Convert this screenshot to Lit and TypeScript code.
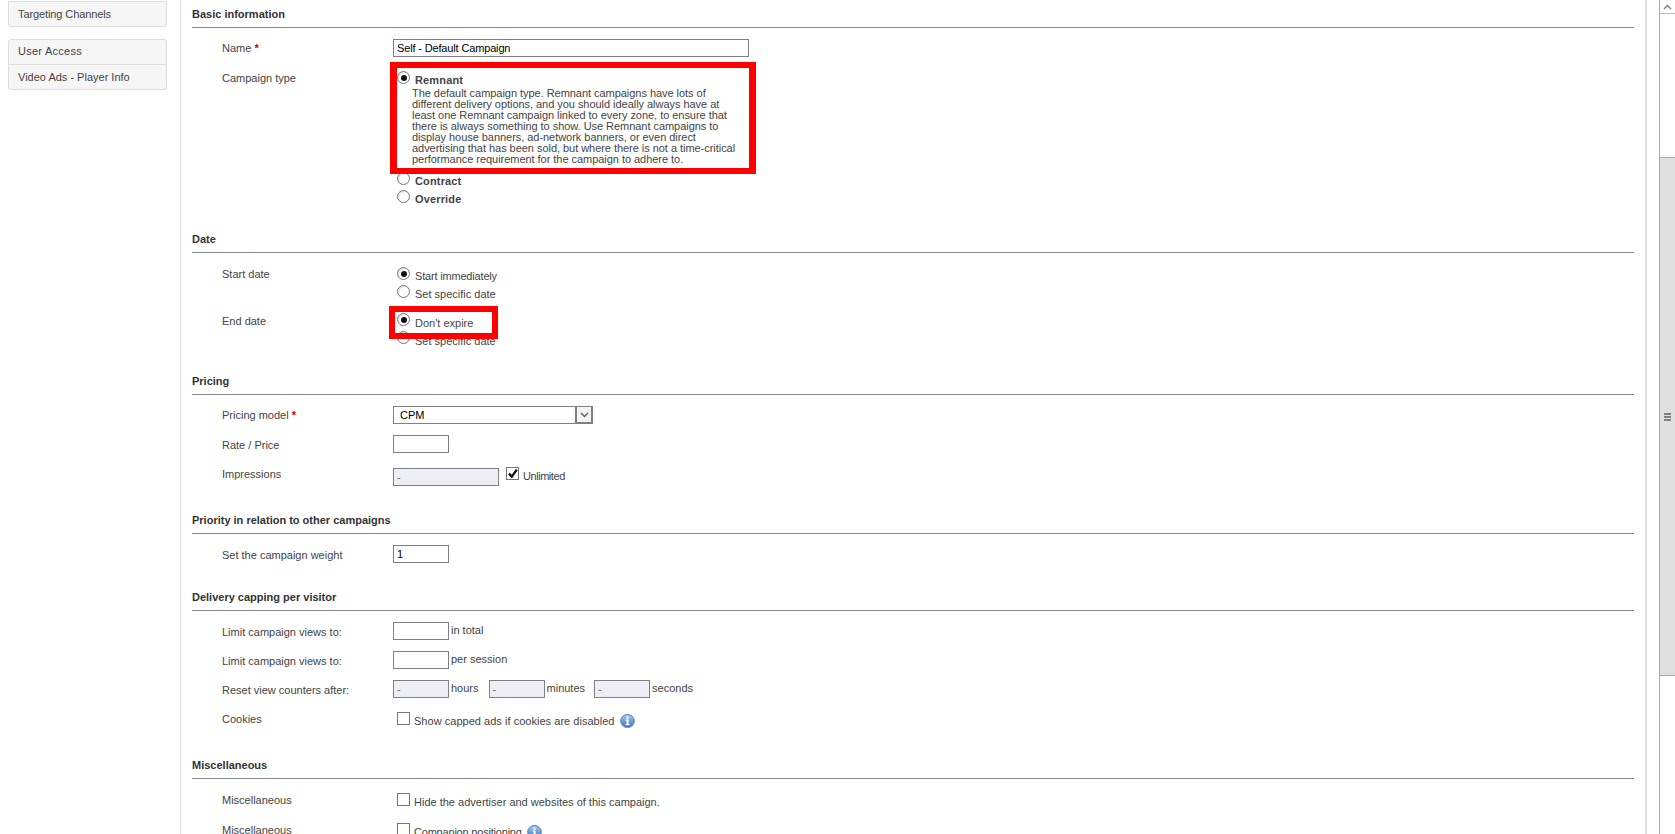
import { LitElement, html, css, svg } from "lit";
import { customElement } from "lit/decorators.js";

const infoIcon = html`<svg class="info" width="15" height="14" viewBox="0 0 15 14" aria-hidden="true">
  <defs><linearGradient id="ig" x1="0" y1="0" x2="0" y2="1"><stop offset="0" stop-color="#a9c8ec"/><stop offset="1" stop-color="#3d78c0"/></linearGradient></defs>
  <ellipse cx="7.5" cy="7" rx="6.8" ry="6.5" fill="url(#ig)" stroke="#4f7fb8"/>
  <rect x="6.4" y="2.6" width="2.2" height="2" fill="#fff"/>
  <path d="M5.6 5.6h3v4.4h1v1.2H5.6V10h1V6.8h-1z" fill="#fff"/>
</svg>`;

const tick = svg`<path d="M2 5.6 L4.8 8.6 L9.8 1.6" fill="none" stroke="#111" stroke-width="2.4"/>`;

const DESC = [
  "The default campaign type. Remnant campaigns have lots of",
  "different delivery options, and you should ideally always have at",
  "least one Remnant campaign linked to every zone, to ensure that",
  "there is always something to show. Use Remnant campaigns to",
  "display house banners, ad-network banners, or even direct",
  "advertising that has been sold, but where there is not a time-critical",
  "performance requirement for the campaign to adhere to.",
];

@customElement("app-root")
export class AppRoot extends LitElement {
  static styles = css`
    :host {
      display: flex;
      width: 1675px;
      height: 834px;
      overflow: hidden;
      background: #fff;
      font-family: "Liberation Sans", Arial, sans-serif;
      font-size: 11px;
      color: #444;
    }
    .side {
      width: 181px;
      flex: none;
      box-sizing: border-box;
      padding: 0 13px 0 8px;
      border-right: 1px solid #ddd;
    }
    .nav {
      border: 1px solid #ddd;
      border-radius: 3px;
      background: #f6f6f6;
      margin-bottom: 12px;
    }
    .nav.cut {
      border-radius: 0 0 3px 3px;
      margin-top: 1px;
    }
    .nav div {
      height: 24px;
      line-height: 24px;
      padding-left: 9px;
      color: #444;
      border-top: 1px solid #ddd;
    }
    .nav div:first-child { border-top: 0; }
    .nav .targeting { letter-spacing: -0.1px; }
    .nav .access { letter-spacing: 0.25px; line-height: 22px; }
    .main {
      width: 1466px;
      flex: none;
      box-sizing: border-box;
      padding-left: 11px;
      padding-right: 11px;
      border-right: 2px solid #e0e0e0;
    }
    .gutter { width: 12px; flex: none; }
    section { padding-bottom: 20px; }
    h2 {
      margin: 0;
      height: 27px;
      line-height: 28px;
      font-size: 11px;
      font-weight: bold;
      color: #333;
      border-bottom: 1px solid #888;
    }
    .row {
      display: grid;
      grid-template-columns: 171px 1fr;
      padding: 11px 0 0 30px;
    }
    .label { height: 18px; line-height: 20px; }
    .label.tight { line-height: 18px; }
    .req { color: #c00; font-weight: bold; }
    .inline { display: flex; align-items: flex-start; }
    input[type="text"] {
      box-sizing: border-box;
      display: block;
      height: 18px;
      width: 56px;
      margin: 0;
      padding: 0 3px;
      border: 1px solid #808080;
      border-radius: 0;
      outline: 0;
      background: #fff;
      color: #000;
      font: 11px "Liberation Sans", Arial, sans-serif;
    }
    input.wide { width: 356px; letter-spacing: -0.15px; }
    input.mid { width: 106px; margin-top: 4px; }
    input.off { background: #eeeef7; color: #666; }
    .suffix { line-height: 16px; margin-left: 2px; }
    .suffix.gap { margin-right: 9px; }
    .suffix.gap-l { margin-right: 10px; }
    .select {
      box-sizing: border-box;
      width: 200px;
      height: 18px;
      display: flex;
      border: 1px solid #808080;
      color: #000;
      line-height: 16px;
      padding-left: 6px;
    }
    .select span { flex: 1; }
    .select b {
      box-sizing: border-box;
      width: 17px;
      border-left: 2px solid #808080;
      border-right: 1px solid #808080;
      border-bottom: 1px solid #808080;
      background: #f4f4f4;
      display: flex;
      align-items: center;
      justify-content: center;
    }
    .group { position: relative; }
    .group.end { margin-top: -1px; padding-bottom: 1px; }
    .group.end .opt { line-height: 26px; }
    .opt { display: flex; height: 18px; padding-left: 4px; line-height: 24px; }
    .radio {
      box-sizing: border-box;
      flex: none;
      width: 13px;
      height: 13px;
      margin-top: 3px;
      border: 1px solid #777;
      border-radius: 50%;
      background: #fff;
      box-shadow: inset 1px 1px 1px #ddd;
      display: flex;
      align-items: center;
      justify-content: center;
    }
    .radio i { width: 6px; height: 6px; border-radius: 50%; background: #111; }
    .opt .text { margin-left: 5px; }
    .opt .bold { font-weight: bold; letter-spacing: 0.15px; }
    .opt .narrow { letter-spacing: -0.18px; }
    .desc {
      margin: 2px 0 0 19px;
      line-height: 11px;
      padding: 0 0 4px;
      white-space: nowrap;
      letter-spacing: -0.04px;
    }
    .desc span { display: block; }
    .check { display: flex; padding-left: 4px; height: 19px; line-height: 24px; }
    .check.after { margin-left: 7px; padding-left: 0; }
    .check.after .text { letter-spacing: -0.45px; }
    .check.last { margin-bottom: 3px; }
    .box {
      box-sizing: border-box;
      flex: none;
      width: 13px;
      height: 13px;
      margin-top: 3px;
      border: 1px solid #777;
      background: #fff;
      display: block;
    }
    .box svg { display: block; }
    .check .text { margin: 0 5px 0 4px; }
    .check .loose { letter-spacing: 0.03px; }
    .check .narrow { letter-spacing: -0.2px; }
    .info { flex: none; margin-top: 5px; }
    .ann {
      position: absolute;
      box-sizing: border-box;
      border: 6px solid #f00;
      border-left-width: 7px;
      border-right-width: 7px;
      pointer-events: none;
    }
    .ann.one { left: -3px; top: -6px; width: 366px; height: 112px; }
    .ann.two { left: -4px; top: -4px; width: 109px; height: 33px; border-width: 6px; }
    .bar {
      width: 16px;
      flex: none;
      box-sizing: border-box;
      border-left: 1px solid #aaa;
      display: flex;
      flex-direction: column;
      background: #fff;
    }
    .up {
      height: 14px;
      flex: none;
      box-sizing: border-box;
      border-bottom: 1px solid #bbb;
      display: flex;
      align-items: center;
      justify-content: center;
    }
    .track-a { height: 143px; flex: none; }
    .thumb {
      height: 519px;
      flex: none;
      background: #dfdfdf;
      border-top: 1px solid #aaa;
      border-bottom: 1px solid #aaa;
      box-sizing: border-box;
      display: flex;
      align-items: center;
      justify-content: center;
    }
    .grip { width: 7px; height: 8px; background: repeating-linear-gradient(#808080 0 2px, transparent 2px 3px); }
  `;

  private radio(label: string, on = false, cls = "") {
    return html`<div class="opt">
      <span class="radio" role="radio" aria-checked=${on}>${on ? html`<i></i>` : ""}</span>
      <span class="text ${cls}">${label}</span>
    </div>`;
  }

  private box(on = false) {
    return html`<span class="box" role="checkbox" aria-checked=${on}>${on
      ? html`<svg width="11" height="11" viewBox="0 0 11 11">${tick}</svg>`
      : ""}</span>`;
  }

  render() {
    return html`
      <aside class="side">
        <div class="nav cut"><div class="targeting">Targeting Channels</div></div>
        <div class="nav"><div class="access">User Access</div><div>Video Ads - Player Info</div></div>
      </aside>
      <main class="main">
        <section>
          <h2>Basic information</h2>
          <div class="row">
            <div class="label tight">Name <span class="req">*</span></div>
            <input class="wide" type="text" value="Self - Default Campaign" />
          </div>
          <div class="row">
            <div class="label">Campaign type</div>
            <div class="group">
              ${this.radio("Remnant", true, "bold")}
              <p class="desc">${DESC.map((l) => html`<span>${l}</span>`)}</p>
              ${this.radio("Contract", false, "bold")}
              ${this.radio("Override", false, "bold")}
              <div class="ann one"></div>
            </div>
          </div>
        </section>
        <section>
          <h2>Date</h2>
          <div class="row">
            <div class="label">Start date</div>
            <div class="group">
              ${this.radio("Start immediately", true, "narrow")}
              ${this.radio("Set specific date")}
            </div>
          </div>
          <div class="row">
            <div class="label">End date</div>
            <div class="group end">
              ${this.radio("Don't expire", true)}
              ${this.radio("Set specific date")}
              <div class="ann two"></div>
            </div>
          </div>
        </section>
        <section>
          <h2>Pricing</h2>
          <div class="row">
            <div class="label tight">Pricing model <span class="req">*</span></div>
            <div class="select"><span>CPM</span><b><svg width="9" height="6" viewBox="0 0 9 6"><path d="M1 1l3.5 3.5L8 1" fill="none" stroke="#666" stroke-width="1.5"/></svg></b></div>
          </div>
          <div class="row">
            <div class="label">Rate / Price</div>
            <input type="text" />
          </div>
          <div class="row">
            <div class="label">Impressions</div>
            <div class="inline">
              <input class="mid off" type="text" value="-" disabled />
              <div class="check after">${this.box(true)}<span class="text">Unlimited</span></div>
            </div>
          </div>
        </section>
        <section>
          <h2>Priority in relation to other campaigns</h2>
          <div class="row">
            <div class="label">Set the campaign weight</div>
            <input type="text" value="1" />
          </div>
        </section>
        <section>
          <h2>Delivery capping per visitor</h2>
          <div class="row">
            <div class="label">Limit campaign views to:</div>
            <div class="inline"><input type="text" /><span class="suffix">in total</span></div>
          </div>
          <div class="row">
            <div class="label">Limit campaign views to:</div>
            <div class="inline"><input type="text" /><span class="suffix">per session</span></div>
          </div>
          <div class="row">
            <div class="label">Reset view counters after:</div>
            <div class="inline">
              <input class="off" type="text" value="-" disabled /><span class="suffix gap-l">hours</span>
              <input class="off" type="text" value="-" disabled /><span class="suffix gap">minutes</span>
              <input class="off" type="text" value="-" disabled /><span class="suffix">seconds</span>
            </div>
          </div>
          <div class="row">
            <div class="label">Cookies</div>
            <div class="check last">${this.box()}<span class="text loose">Show capped ads if cookies are disabled</span>${infoIcon}</div>
          </div>
        </section>
        <section>
          <h2>Miscellaneous</h2>
          <div class="row">
            <div class="label">Miscellaneous</div>
            <div class="check">${this.box()}<span class="text">Hide the advertiser and websites of this campaign.</span></div>
          </div>
          <div class="row">
            <div class="label">Miscellaneous</div>
            <div class="check">${this.box()}<span class="text narrow">Companion positioning</span>${infoIcon}</div>
          </div>
        </section>
      </main>
      <div class="gutter"></div>
      <div class="bar" aria-hidden="true">
        <div class="up"><svg width="9" height="6" viewBox="0 0 9 6"><path d="M1 5l3.5-3.5L8 5" fill="none" stroke="#777" stroke-width="1.3"/></svg></div>
        <div class="track-a"></div>
        <div class="thumb"><div class="grip"></div></div>
      </div>
    `;
  }
}
